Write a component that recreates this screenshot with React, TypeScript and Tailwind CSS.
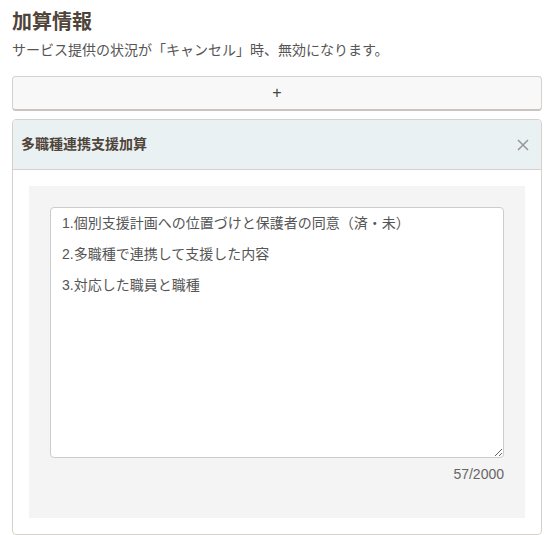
import React from 'react';

const memo = '1.個別支援計画への位置づけと保護者の同意（済・未）\n2.多職種で連携して支援した内容\n3.対応した職員と職種';

export default function App() {
  return (
    <div className="w-[551px] h-[535px] bg-white pl-3 pr-[9px] pt-2 text-[#555] font-['Liberation_Sans','Noto_Sans_CJK_JP',sans-serif]">
      {/* Heading */}
      <h2 className="text-[20px] leading-[28px] font-bold text-[#4f4439]">加算情報</h2>
      <p className="mt-1 text-[14px] leading-[20px] text-[#555]">
        サービス提供の状況が「キャンセル」時、無効になります。
      </p>

      {/* Add button */}
      <button className="mt-4 w-full h-[35px] rounded-[4px] border border-[#d6d1cc] border-b-2 border-b-[#c9c4bf] bg-[#f8f8f8] text-[16px] text-[#444]">
        +
      </button>

      {/* Card */}
      <div className="mt-2 h-[416px] rounded-[4px] border border-[#d6d1cc] overflow-hidden flex flex-col">
        <div className="h-[50px] shrink-0 flex items-center justify-between pl-2 pr-3 bg-[#e9f1f3] border-b border-[#d6d1cc]">
          <span className="text-[14px] font-bold text-[#4f4439]">多職種連携支援加算</span>
          <svg width="12" height="12" viewBox="0 0 12 12" className="text-[#999]">
            <path d="M1 1 L11 11 M11 1 L1 11" stroke="currentColor" strokeWidth="1.6" />
          </svg>
        </div>
        <div className="flex-1 p-4">
          <div className="h-full bg-[#f4f4f4] px-[21px] pt-[21px]">
            <textarea
              defaultValue={memo}
              className="block w-full h-[251px] resize-y rounded-[4px] border border-[#ccc] bg-white px-[11px] pt-0 text-[14px] leading-[31px] text-[#555] outline-none"
            />
            <div className="mt-[6px] text-right text-[14px] leading-[20px] text-[#666]">57/2000</div>
          </div>
        </div>
      </div>
    </div>
  );
}
